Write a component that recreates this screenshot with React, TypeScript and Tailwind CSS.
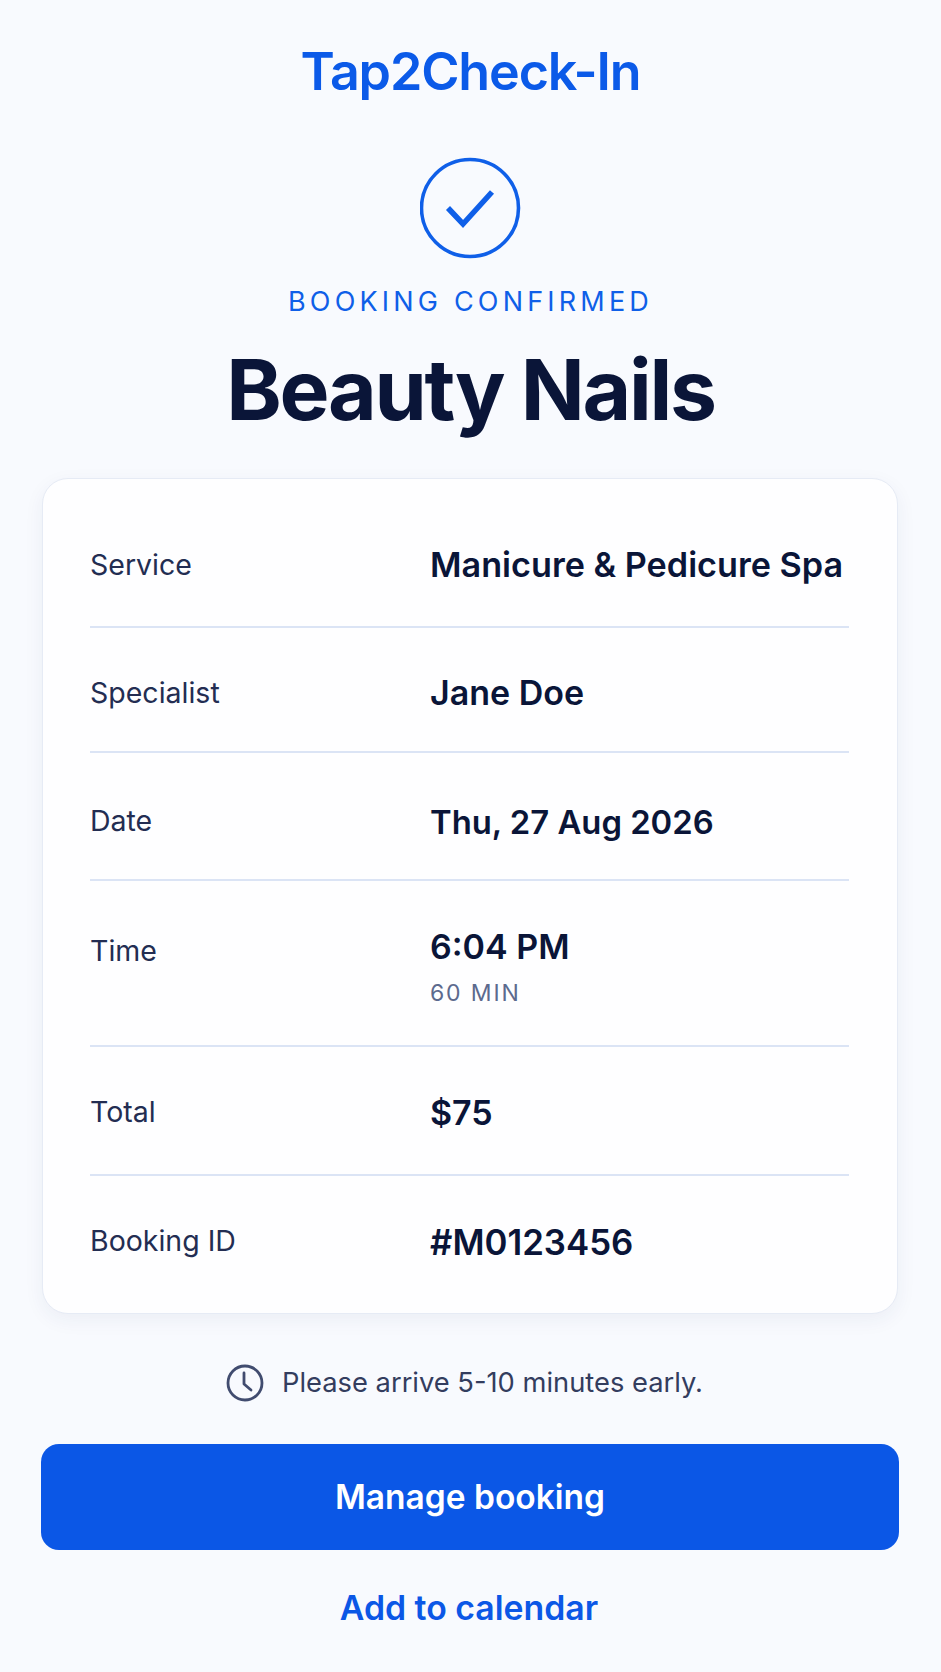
import React from "react";

const rows = [
  { label: "Service", value: "Manicure & Pedicure Spa", c: "h-[149px] pt-[26px]", vc: "text-[34.2px]" },
  { label: "Specialist", value: "Jane Doe", c: "h-[125px] pt-[8px]", vc: "text-[34px]" },
  { label: "Date", value: "Thu, 27 Aug 2026", c: "h-[128px] pt-[12px]", vc: "text-[32.8px]" },
  { label: "Time", value: "6:04 PM", sub: "60 MIN", c: "h-[167px] pt-[7px]", vc: "text-[34px]", lc: "pb-[30px]" },
  { label: "Total", value: "$75", c: "h-[129px] pt-[4px]", vc: "text-[34px]" },
  { label: "Booking ID", value: "#M0123456", c: "h-[137px] pb-[6px]", vc: "text-[34.8px]", last: true },
];

export default function App() {
  return (
    <div className="w-[941px] h-[1672px] overflow-hidden bg-[#f8fafe] flex flex-col items-center font-['Inter',sans-serif]">
      <div className="mt-[38px] h-[68px] leading-[68px] text-[52px] font-semibold tracking-[-0.022em] text-[#0b5ae8]">Tap2Check-In</div>
      <svg className="mt-[51px] block" width="102" height="102" viewBox="0 0 102 102" fill="none">
        <circle cx="50" cy="51" r="48.5" stroke="#0f5fe8" strokeWidth="3.6" />
        <path d="M28 51 L43 67 L72 35" stroke="#0f5fe8" strokeWidth="5.5" strokeLinecap="butt" strokeLinejoin="miter" />
      </svg>
      <div className="mt-[26px] h-[34px] leading-[34px] text-[27px] tracking-[0.155em] text-[#0f5fe8]">BOOKING CONFIRMED</div>
      <div className="mt-[16px] h-[110px] leading-[110px] text-[84px] font-bold tracking-[-0.027em] text-[#0a1538]">Beauty Nails</div>
      <div className="mt-[33px] w-[856px] h-[836px] -ml-[1px] rounded-[26px] bg-[#fefeff] border border-[#e6ebf5] shadow-[0_6px_20px_rgba(30,50,110,0.06)] pl-[47px] pr-[48px] flex flex-col">
        {rows.map((r) => (
          <div key={r.label} className={`${r.c} ${r.last ? "" : "border-b-2 border-[#dbe4f5]"} grid grid-cols-[340px_1fr] items-center`}>
            <div className={`text-[28.5px] text-[#232d52] ${r.lc ?? ""}`}>{r.label}</div>
            <div>
              <div className={`${r.vc} leading-[42px] font-semibold text-[#0a1538] whitespace-nowrap`}>{r.value}</div>
              {r.sub && <div className="mt-[11px] text-[23px] leading-[28px] tracking-[0.08em] text-[#5c6a8e]">{r.sub}</div>}
            </div>
          </div>
        ))}
      </div>
      <div className="mt-[50px] mr-[12px] h-[38px] flex items-center gap-[18px] text-[27.3px] text-[#333d5e]">
        <svg width="38" height="38" viewBox="0 0 38 38" fill="none">
          <circle cx="19" cy="19" r="17" stroke="#414c6f" strokeWidth="2.8" />
          <path d="M18 9 V20 L25 26" stroke="#414c6f" strokeWidth="2.8" strokeLinecap="round" strokeLinejoin="round" />
        </svg>
        <span>Please arrive 5-10 minutes early.</span>
      </div>
      <button className="mt-[42px] w-[858px] h-[106px] rounded-[18px] bg-[#0b57e6] text-white text-[33.5px] font-semibold -ml-[1px]">Manage booking</button>
      <div className="mt-[32px] mr-[3px] h-[52px] leading-[52px] text-[33.8px] font-semibold text-[#0b57e6]">Add to calendar</div>
    </div>
  );
}
